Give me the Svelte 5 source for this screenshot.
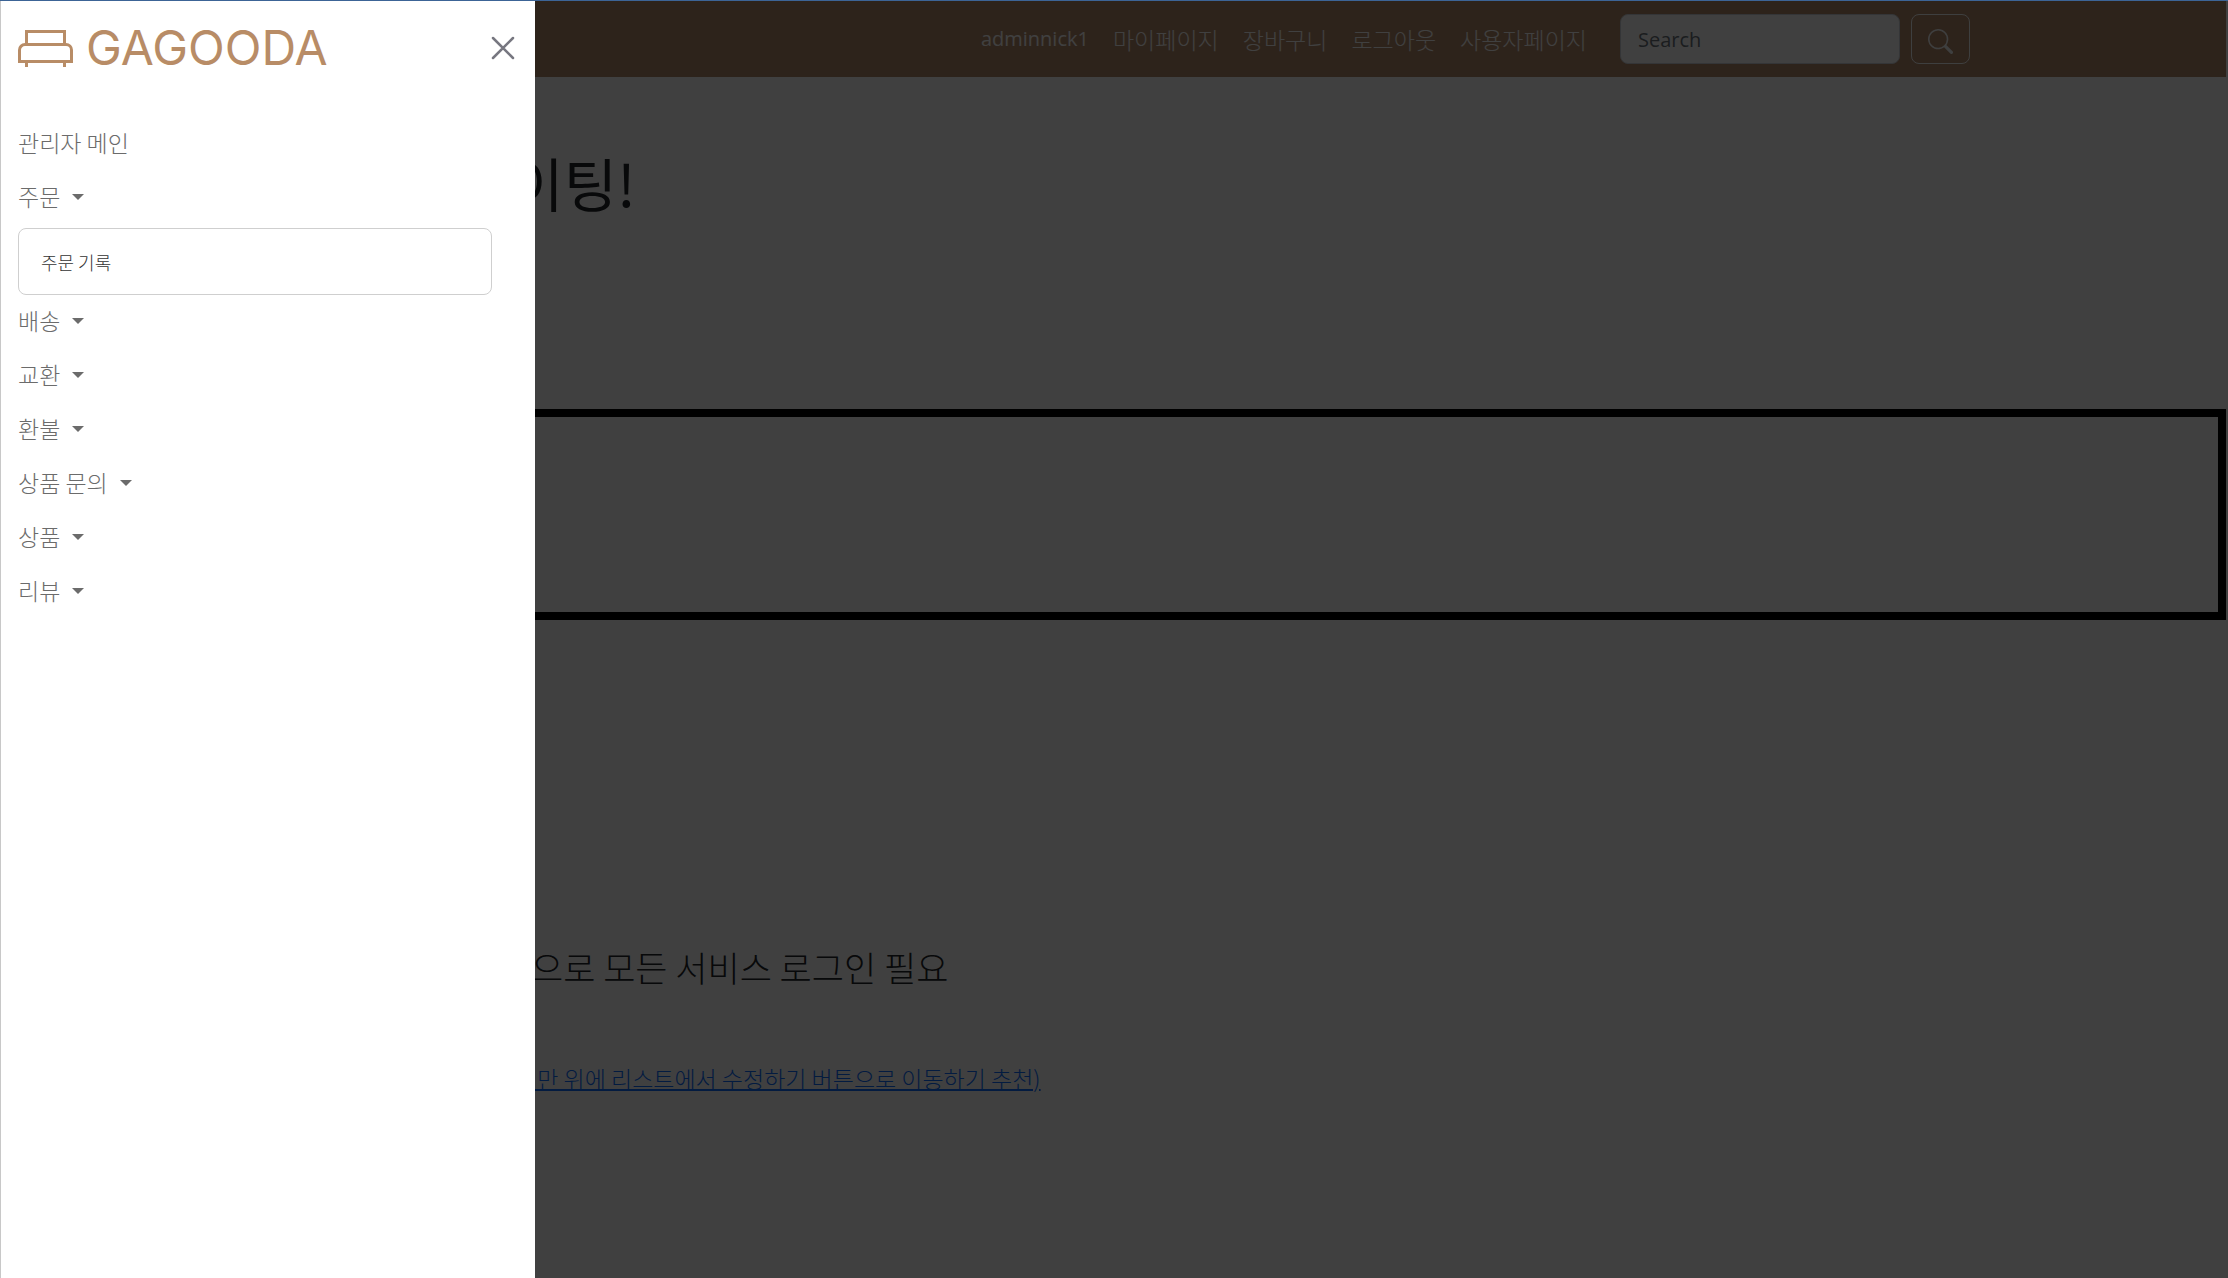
<script>
  let drawerOpen = $state(true);
  let query = $state('');
  let expanded = $state('주문');

  const navLinks = ['마이페이지', '장바구니', '로그아웃', '사용자페이지'];
  const groups = [
    { name: '주문', items: ['주문 기록'] },
    { name: '배송', items: [] },
    { name: '교환', items: [] },
    { name: '환불', items: [] },
    { name: '상품 문의', items: [] },
    { name: '상품', items: [] },
    { name: '리뷰', items: [] }
  ];

  function toggle(name) {
    expanded = expanded === name ? '' : name;
  }
</script>

<div class="page">
  <header class="topbar">
    <nav class="links" aria-label="사용자">
      <a class="nick" href="#me">adminnick1</a>
      {#each navLinks as link}
        <a href="#top">{link}</a>
      {/each}
    </nav>
    <form class="search" onsubmit={(e) => e.preventDefault()}>
      <input type="search" placeholder="Search" aria-label="Search" bind:value={query} />
      <button type="submit" aria-label="검색">
        <svg viewBox="0 0 16 16" width="25" height="25" fill="currentColor" aria-hidden="true">
          <path d="M11.742 10.344a6.5 6.5 0 1 0-1.397 1.398h-.001c.03.04.062.078.098.115l3.85 3.85a1 1 0 0 0 1.415-1.414l-3.85-3.85a1.007 1.007 0 0 0-.115-.1zM12 6.5a5.5 5.5 0 1 1-11 0 5.5 5.5 0 0 1 11 0z" />
        </svg>
      </button>
    </form>
  </header>

  <main>
    <h1>화이팅!</h1>
    <section class="frame" aria-label="알림"></section>
    <h2>으로 모든 서비스 로그인 필요</h2>
    <p><a href="#edit">하지만 위에 리스트에서 수정하기 버튼으로 이동하기 추천)</a></p>
  </main>
</div>

{#if drawerOpen}
  <div class="backdrop"></div>
  <aside class="drawer" aria-label="관리자 메뉴">
    <div class="drawer-head">
      <a class="logo" href="#home">
        <svg viewBox="0 0 55 37" width="55" height="37" fill="none" stroke="currentColor" stroke-width="3" aria-hidden="true">
          <path d="M8.5 14V1.5h38V14" />
          <path d="M1.500 31.500V20a5.500 5.500 0 0 1 5.500-5.500h41a5.500 5.500 0 0 1 5.500 5.500v11.500z" />
          <path d="M8.500 32v5M46.500 32v5" />
        </svg>
        <span>GAGOODA</span>
      </a>
      <button class="close" type="button" aria-label="닫기" onclick={() => (drawerOpen = false)}>
        <svg viewBox="0 0 24 24" width="24" height="24" fill="none" stroke="currentColor" stroke-width="2.500" stroke-linecap="round" aria-hidden="true">
          <path d="M2 2l20 20M22 2L2 22" />
        </svg>
      </button>
    </div>
    <nav class="menu" aria-label="관리자">
      <a class="row" href="#admin">관리자 메인</a>
      {#each groups as group}
        <button class="row" type="button" aria-expanded={expanded === group.name} onclick={() => toggle(group.name)}>
          {group.name}<span class="caret"></span>
        </button>
        {#if expanded === group.name && group.items.length}
          <div class="submenu">
            {#each group.items as item}
              <a href="#item">{item}</a>
            {/each}
          </div>
        {/if}
      {/each}
    </nav>
  </aside>
{/if}

<style>
  :global(body) {
    margin: 0;
    background: #fff;
    font-family: 'Noto Sans CJK KR', sans-serif;
    font-size: 23px;
    font-weight: 300;
    line-height: 36px;
    color: #212529;
  }

  :global(#app) {
    border-top: 1px solid #3c6496;
  }

  .page {
    padding-right: 2px;
  }

  .topbar {
    display: flex;
    align-items: center;
    justify-content: flex-end;
    gap: 33px;
    padding: 13px 11.5% 13px 20px;
    background: #b58c6c;
  }

  .links {
    display: flex;
    gap: 24px;
  }

  .links a {
    color: #fff;
    text-decoration: none;
    white-space: nowrap;
  }

  .links .nick {
    font-family: 'Open Sans', sans-serif;
    font-size: 20px;
    font-weight: 400;
  }

  .search {
    display: flex;
    gap: 11px;
  }

  .search input {
    box-sizing: border-box;
    width: 280px;
    height: 50px;
    padding: 0 17px;
    border: 1px solid #ced4da;
    border-radius: 8px;
    background: #fff;
    font-family: 'Open Sans', 'Noto Sans CJK KR', sans-serif;
    font-size: 20px;
    color: #212529;
  }

  .search input::placeholder {
    color: #6c757d;
    opacity: 1;
  }

  .search button {
    display: grid;
    place-items: center;
    box-sizing: border-box;
    width: 59px;
    height: 50px;
    padding: 5px 0 0;
    border: 1px solid #f8f9fa;
    border-radius: 8px;
    background: none;
    color: #f8f9fa;
  }

  h1 {
    margin: 69px 0 191px;
    padding-left: 457px;
    font-size: 58px;
    font-weight: 400;
    line-height: 72px;
  }

  .frame {
    box-sizing: border-box;
    height: 211px;
    border: 8px solid #000;
  }

  h2 {
    margin: 325px 0 71px;
    padding-left: 531px;
    font-size: 35px;
    font-weight: 300;
    line-height: 44px;
  }

  p {
    margin: 0;
    padding-left: 495px;
  }

  p a {
    color: #0d6efd;
    text-decoration-thickness: 2px;
  }

  .backdrop {
    position: fixed;
    inset: 1px 0 0;
    background: rgba(0, 0, 0, 0.75);
  }

  .drawer {
    position: fixed;
    inset: 1px auto 0 0;
    box-sizing: border-box;
    width: 535px;
    max-width: 100%;
    overflow: auto;
    border-left: 1px solid #c8c8c8;
    background: #fff;
  }

  .drawer-head {
    display: flex;
    align-items: center;
    justify-content: space-between;
    padding: 22px 20px 22px 17px;
  }

  .logo {
    display: flex;
    align-items: center;
    gap: 13px;
    color: #b88c66;
    font-family: Inter, sans-serif;
    font-size: 48px;
    font-weight: 400;
    line-height: 50px;
    text-decoration: none;
  }

  .close {
    display: grid;
    padding: 0;
    border: 0;
    background: none;
    color: #777780;
  }

  .menu {
    display: flex;
    flex-direction: column;
    align-items: flex-start;
    padding: 22px 43px 22px 17px;
  }

  .row {
    display: flex;
    align-items: center;
    gap: 12px;
    padding: 7px 0 11px;
    border: 0;
    background: none;
    font: inherit;
    color: #6b6b6b;
    text-decoration: none;
    cursor: pointer;
  }

  .caret {
    margin-top: 2px;
    border: 6px solid transparent;
    border-top-color: #6b6b6b;
    border-bottom: 0;
  }

  .submenu {
    align-self: stretch;
    margin-top: 3px;
    padding: 17px 22px 15px;
    border: 1px solid #cfcfcf;
    border-radius: 8px;
  }

  .submenu a {
    display: block;
    font-size: 18px;
    line-height: 33px;
    color: #333;
    text-decoration: none;
  }
</style>
